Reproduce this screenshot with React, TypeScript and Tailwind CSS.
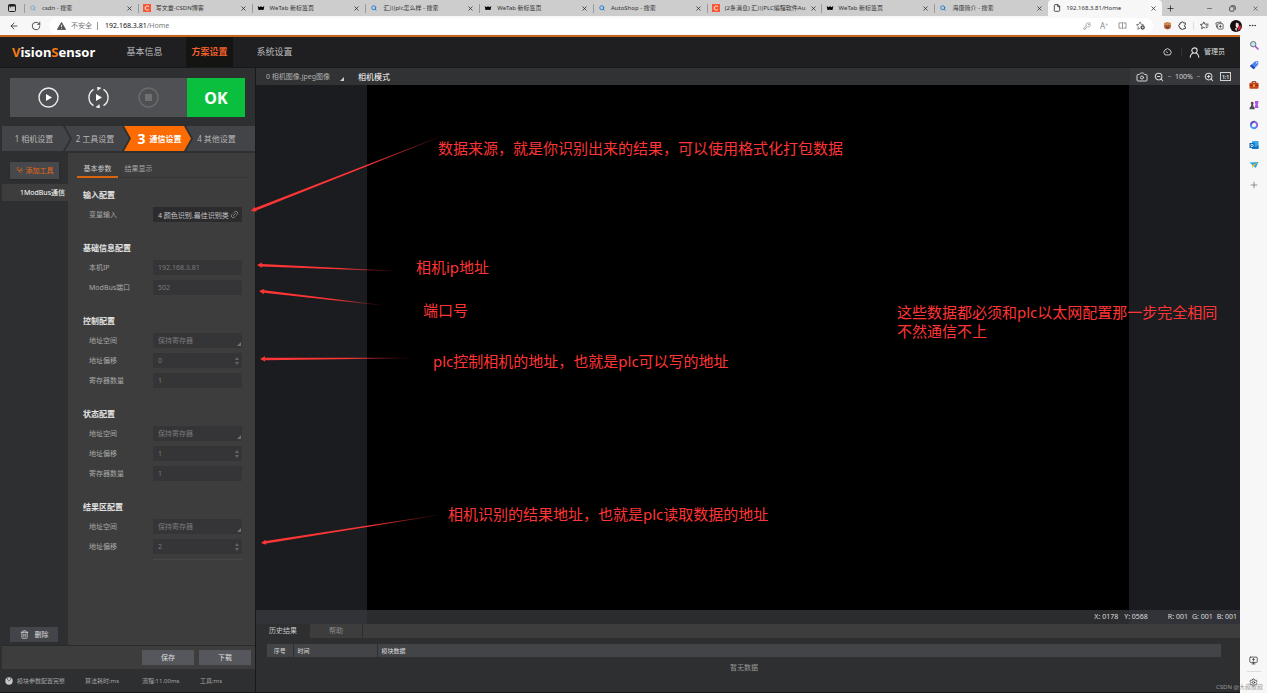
import { useId, useState } from 'react';
import type { ReactNode } from 'react';
import {
  ArrowLeft,
  Camera,
  File,
  KeyRound,
  Link2,
  Minus,
  MonitorUp,
  MoreHorizontal,
  Plus,
  RotateCw,
  Search,
  Settings,
  Trash2,
  X,
  ZoomIn,
  ZoomOut,
} from 'lucide-react';

type Favicon = 'search' | 'searchPale' | 'csdn' | 'wetab' | 'file';

const browserTabs: { title: string; icon: Favicon }[] = [
  { title: 'csdn - 搜索', icon: 'searchPale' },
  { title: '写文章-CSDN博客', icon: 'csdn' },
  { title: 'WeTab 新标签页', icon: 'wetab' },
  { title: '汇川plc怎么样 - 搜索', icon: 'search' },
  { title: 'WeTab 新标签页', icon: 'wetab' },
  { title: 'AutoShop - 搜索', icon: 'search' },
  { title: '(2条消息) 汇川PLC编程软件Au', icon: 'csdn' },
  { title: 'WeTab 新标签页', icon: 'wetab' },
  { title: '海康简介 - 搜索', icon: 'search' },
  { title: '192.168.3.81/Home', icon: 'file' },
];

const notes = [
  { place: 'left-[438px] top-[139px]', lines: ['数据来源，就是你识别出来的结果，可以使用格式化打包数据'] },
  { place: 'left-[416px] top-[258px]', lines: ['相机ip地址'] },
  { place: 'left-[423px] top-[301px]', lines: ['端口号'] },
  { place: 'left-[433px] top-[352px]', lines: ['plc控制相机的地址，也就是plc可以写的地址'] },
  { place: 'left-[448px] top-[505px]', lines: ['相机识别的结果地址，也就是plc读取数据的地址'] },
  { place: 'left-[897px] top-[303px]', lines: ['这些数据都必须和plc以太网配置那一步完全相同', '不然通信不上'] },
];

// tip x, tip y, tail x, tail y
const arrows = [
  [251, 211, 442, 136],
  [257, 265, 394, 271],
  [259, 291, 380, 305],
  [260, 359, 408, 358],
  [261, 543, 439, 515],
];

function TabIcon({ icon }: { icon: Favicon }) {
  if (icon === 'csdn') {
    return (
      <svg viewBox="0 0 8 8" className="size-2 shrink-0">
        <rect width="8" height="8" fill="#fc5531" />
        <path d="M5.9 2.4C4.5 1.6 2.2 2 2.1 4.1c0 2 2.1 2.3 3.6 1.6" fill="none" stroke="#fff" strokeWidth="1" />
      </svg>
    );
  }
  if (icon === 'wetab') {
    return (
      <svg viewBox="0 0 8 8" className="size-2 shrink-0">
        <path d="M.7 2l1.8 1.3L4 2.2l1.5 1.1L7.3 2l-.8 4H4.7L4 5.2 3.3 6H1.5z" fill="#000" />
      </svg>
    );
  }
  if (icon === 'file') return <File className="size-2 shrink-0 text-black" strokeWidth={2} />;
  return (
    <Search
      className={icon === 'search' ? 'size-[6px] shrink-0 text-[#1378d1]' : 'size-[6px] shrink-0 text-[#7ea6c8]'}
      strokeWidth={3.5}
    />
  );
}

function BrowserChrome() {
  return (
    <header className="text-[#333]">
      <div className="flex h-4 items-center bg-[#cdcdcd]">
        <button aria-label="标签页" className="flex w-6 shrink-0 justify-center">
          <svg viewBox="0 0 8 8" className="size-2" fill="none" stroke="#222">
            <rect x=".5" y=".5" width="7" height="7" rx="1" />
            <path d="M.5 1.7h7" strokeWidth="1.6" />
            <path d="M2.6 2v1.4" />
          </svg>
        </button>
        <div className="flex h-full min-w-0 flex-1">
          {browserTabs.map((tab, i) => (
            <div
              key={i}
              className={
                i === browserTabs.length - 1
                  ? 'flex min-w-0 flex-1 items-center gap-[5px] rounded-t bg-[#f7f7f7] px-[5px] text-[6px]'
                  : 'flex min-w-0 flex-1 items-center gap-[5px] bg-[linear-gradient(#9a9a9a,#9a9a9a)] bg-size-[1px_9px] bg-position-[0_4px] bg-no-repeat px-[5px] text-[6px]'
              }
            >
              <span className="flex w-2 shrink-0 justify-center"><TabIcon icon={tab.icon} /></span>
              <span className="flex-1 whitespace-nowrap">{tab.title}</span>
              <button aria-label="关闭标签页">
                <X className="size-[7px] text-[#222]" strokeWidth={2.5} />
              </button>
            </div>
          ))}
        </div>
        <div className="flex w-[105px] shrink-0 items-center justify-between pr-[8px] pl-1">
          <button aria-label="新建标签页"><Plus className="size-[9px] text-[#222]" strokeWidth={2} /></button>
          <div className="flex gap-4">
            <button aria-label="最小化"><Minus className="size-[7px]" /></button>
            <button aria-label="还原">
              <svg viewBox="0 0 8 8" className="size-[7px]" fill="none" stroke="#333" strokeWidth=".9">
                <rect x=".7" y="2" width="5" height="5" rx="1" />
                <path d="M2.4.8h3.3A1.5 1.5 0 017.2 2.3v3.2" />
              </svg>
            </button>
            <button aria-label="关闭"><X className="size-[7px]" /></button>
          </div>
        </div>
      </div>
      <div className="flex h-[19px] items-center bg-[#f7f7f7]">
        <div className="flex w-[49px] shrink-0 items-center justify-center gap-3">
          <button aria-label="返回"><ArrowLeft className="size-[10px]" strokeWidth={2} /></button>
          <button aria-label="刷新"><RotateCw className="size-[10px]" strokeWidth={2} /></button>
        </div>
        <div className="flex h-4 flex-1 items-center rounded-full bg-white px-2">
          <svg viewBox="0 0 10 9" className="h-2 w-[9px]">
            <path d="M5 .5L9.6 8.5H.4z" fill="#555" stroke="#555" strokeLinejoin="round" />
            <path d="M5 3v2.8M5 6.6v1" stroke="#fff" strokeWidth=".9" />
          </svg>
          <span className="ml-[5px] text-[#777]">不安全</span>
          <span className="mr-[7px] ml-[5px] h-2 w-px bg-[#999]" />
          <span className="text-[#111]">192.168.3.81<span className="text-[#777]">/Home</span></span>
          <div className="ml-auto flex items-center gap-[9px] text-[#888]">
            <KeyRound className="size-2" />
            <span className="w-[9px] text-[8px]">A<sup className="text-[5px]">»</sup></span>
            <svg viewBox="0 0 10 8" className="h-[7px] w-[9px]" fill="none" stroke="#888">
              <path d="M4 1H1v6h3M6 1h3v6H6M5 0v8" />
            </svg>
            <svg viewBox="0 0 10 10" className="size-[9px]" fill="none" stroke="#666" strokeLinejoin="round">
              <path d="M4.6 8L2 9.2l.5-3L.5 4.1l2.8-.4L4.6 1l1.3 2.7 2.6.4" strokeWidth=".9" />
              <circle cx="7.4" cy="7.2" r="2.4" fill="#444" stroke="none" />
              <path d="M7.4 6v2.4M6.2 7.2h2.4" stroke="#fff" strokeWidth=".7" />
            </svg>
          </div>
        </div>
        <div className="flex w-[114px] shrink-0 items-center justify-between pr-[10px] pl-[10px]">
          <svg viewBox="0 0 10 10" className="size-[9px]">
            <circle cx="5" cy="5.4" r="4" fill="#b5613c" />
            <path d="M1 1.5l2 1.3 2-1.6 2 1.6 2-1.3-.4 3.4H1.4z" fill="#d78a4c" />
            <path d="M3 5.2h1.2M5.8 5.2H7M3.5 7.2h3" stroke="#4a1f16" strokeWidth=".9" />
          </svg>
          <svg viewBox="0 0 10 10" className="size-[9px]" fill="none" stroke="#333">
            <path d="M3.6 2.1a1.2 1.2 0 012.4 0h2.2v2.1a1.1 1.1 0 000 2.3v2H6.1a1.2 1.2 0 01-2.4 0H2.2V6.8a1.5 1.5 0 010-3V2.1z" />
          </svg>
          <span className="h-2 w-px bg-[#ddd]" />
          <svg viewBox="0 0 10 10" className="size-[9px]" fill="none" stroke="#333" strokeLinejoin="round">
            <path d="M5.6 7.8L4.2 7.1 1.8 8.6l.5-2.8L.4 3.9l2.6-.4L4.2 1l1.2 2.5h4M6.4 5.4h3M6.4 7.3h2" strokeWidth=".9" />
          </svg>
          <svg viewBox="0 0 10 10" className="size-[9px]" fill="none" stroke="#333">
            <path d="M2 7.5L1 2.2 6.5 1l.4 1.5" strokeWidth=".8" />
            <rect x="3" y="3" width="6" height="6" rx="1" strokeWidth=".8" />
            <path d="M6 4.5v3M4.5 6h3" strokeWidth=".8" />
          </svg>
          <svg viewBox="0 0 12 12" className="size-3">
            <circle cx="6" cy="6" r="6" fill="#170d10" />
            <path d="M6 2.4l2.6 1.2.3 3L7 8.4 5.6 6z" fill="#f0dcd6" />
            <path d="M8.5 6l2.8-.8-.8 4-3 1.8z" fill="#cf2638" />
            <path d="M5 8l2 .6-.8 2.8z" fill="#fff" />
          </svg>
          <MoreHorizontal className="size-[9px]" strokeWidth={2.5} />
        </div>
      </div>
    </header>
  );
}

function EdgeSidebar() {
  return (
    <aside className="flex w-[27px] shrink-0 flex-col items-center bg-[#f7f7f7] pt-[5px] pb-[6px]">
      <div className="flex flex-col items-center gap-[10px]">
        <svg viewBox="0 0 10 10" className="size-[10px]">
          <path d="M6 6l3 3" stroke="#b14be0" strokeWidth="1.7" strokeLinecap="round" />
          <circle cx="4.2" cy="4.2" r="2.7" fill="#c9e3ee" stroke="#68747c" />
        </svg>
        <svg viewBox="0 0 10 10" className="size-[10px]">
          <path d="M1 6l4.8-4.4L9.4 1l-.3 3.8L4.7 9.3z" fill="#4f86f4" />
          <path d="M1 6l1.6-1.4 3.6 3.2-1.5 1.5z" fill="#2349b8" />
          <circle cx="7.7" cy="2.7" r=".7" fill="#fff" />
        </svg>
        <svg viewBox="0 0 10 10" className="size-[10px]">
          <path d="M3.2 3V1.7h3.6V3" fill="none" stroke="#7d2b14" />
          <rect x=".5" y="2.7" width="9" height="6" rx="1" fill="#c9431c" />
          <path d="M.5 5.3h9" stroke="#8e2a10" />
          <rect x="4" y="4.5" width="2" height="2" fill="#f2b84c" />
        </svg>
        <svg viewBox="0 0 10 10" className="size-[10px]">
          <path d="M6 1h3.4v2L8.7 4l.8 4H5.8l.7-4L6 3z" fill="#b44bea" />
          <path d="M3.2 1.8a1.4 1.4 0 01.9 2.5l.4 2.2 1.2 1.2v1.5H.6V7.7l1.2-1.2.5-2.2a1.4 1.4 0 01.9-2.5z" fill="#504c56" />
        </svg>
        <svg viewBox="0 0 10 10" className="size-[10px]" fill="none" strokeWidth="2.1" strokeLinecap="round">
          <path d="M5.6 1.8A3.2 3.2 0 002 4.6" stroke="#5b51c8" />
          <path d="M1.9 5.6a3.2 3.2 0 004.6 2.2" stroke="#4a9bf0" />
          <path d="M7.4 7A3.2 3.2 0 007 2.5" stroke="#8a6be8" />
        </svg>
        <svg viewBox="0 0 10 10" className="size-[10px]">
          <rect x="3" y="1" width="6.5" height="8" rx=".8" fill="#31a5e7" />
          <path d="M3 5l3.5 2.2L9.5 5v4H3z" fill="#1272c4" />
          <rect x=".5" y="3" width="5" height="5" rx=".6" fill="#0a64b5" />
          <circle cx="3" cy="5.5" r="1.2" fill="none" stroke="#fff" strokeWidth=".8" />
        </svg>
        <svg viewBox="0 0 10 10" className="size-[10px]">
          <path d="M.5 2.5L9.5 2 6.8 8 4.5 6z" fill="#2aa6e2" />
          <path d="M9.5 2L3 5.3 3.5 8.4 4.6 6.2z" fill="#f2b632" />
        </svg>
        <Plus className="size-[10px] text-[#555]" strokeWidth={1.5} />
      </div>
      <div className="mt-auto flex flex-col items-center gap-[6px] text-[#333]">
        <MonitorUp className="size-[9px]" strokeWidth={2} />
        <span className="h-px w-[14px] bg-[#ddd]" />
        <Settings className="size-[9px]" strokeWidth={2} />
      </div>
    </aside>
  );
}

function Section({ title, children }: { title: string; children: ReactNode }) {
  return (
    <section>
      <h3 className="mb-[7px] text-[8px] font-bold text-[#e2e2e2]">{title}</h3>
      <div className="flex flex-col gap-[5px] pl-[6px]">{children}</div>
    </section>
  );
}

interface FieldProps {
  label: string;
  value: string;
  kind?: 'text' | 'select' | 'number' | 'link';
}

function Field({ label, value, kind = 'text' }: FieldProps) {
  const id = useId();
  return (
    <div className="flex h-[15px] items-center">
      <label htmlFor={id} className="w-16 text-[#a9a9a9]">{label}</label>
      <div className="relative flex-1">
        {kind === 'select' ? (
          <select id={id} className="block h-[15px] w-full appearance-none bg-[#353537] px-[5px] text-[#7a7a7a]">
            <option>{value}</option>
          </select>
        ) : (
          <input
            id={id}
            defaultValue={value}
            className={
              kind === 'link'
                ? 'block h-[15px] w-full bg-[#2c2c2f] pr-[13px] pl-[5px] text-[#c4c4c4]'
                : 'block h-[15px] w-full bg-[#353537] px-[5px] text-[#7a7a7a]'
            }
          />
        )}
        {kind === 'select' && (
          <svg viewBox="0 0 4 4" className="absolute right-px bottom-[2px] size-1"><path d="M4 0v4H0z" fill="#737373" /></svg>
        )}
        {kind === 'number' && (
          <svg viewBox="0 0 4 8" className="absolute top-1 right-[3px] h-2 w-1">
            <path d="M2 0l2 3H0zM2 8l2-3H0z" fill="#666" />
          </svg>
        )}
        {kind === 'link' && <Link2 className="absolute top-[3px] right-[3px] size-[9px] -rotate-45 text-[#999]" />}
      </div>
    </div>
  );
}

function RunControls() {
  return (
    <div className="mx-[10px] mt-[10px] flex h-[39px]">
      <div className="flex flex-1 items-center gap-[29px] bg-[#4f5054] pl-7">
        <button aria-label="单次运行">
          <svg viewBox="0 0 21 21" className="size-[21px]">
            <circle cx="10.5" cy="10.5" r="9.5" fill="none" stroke="#eee" strokeWidth="1.4" />
            <path d="M8 7l6 3.5L8 14z" fill="#fff" />
          </svg>
        </button>
        <button aria-label="连续运行">
          <svg viewBox="0 0 21 21" className="size-[21px]" fill="none" stroke="#eee" strokeWidth="1.4">
            <path d="M5.5 2.4A9.5 9.5 0 005.5 18.6M8.3 19.8a9.5 9.5 0 002.7.2M15.5 18.6a9.5 9.5 0 000-16.2M12.7 1.2a9.5 9.5 0 00-2.7-.2" />
            <path d="M9 -.5l3.5 1.8L9.6 4zM12 21.5l-3.5-1.8 2.9-2.7z" fill="#eee" stroke="none" />
            <path d="M8 7l6 3.5L8 14z" fill="#fff" stroke="none" />
          </svg>
        </button>
        <button aria-label="停止">
          <svg viewBox="0 0 21 21" className="size-[21px]">
            <circle cx="10.5" cy="10.5" r="9.5" fill="none" stroke="#6c6c6e" strokeWidth="1.4" />
            <rect x="7" y="7" width="7" height="7" fill="#707072" />
          </svg>
        </button>
      </div>
      <div className="flex w-[58px] items-center justify-center bg-[#0bbf3e] text-base leading-4 font-bold text-white">OK</div>
    </div>
  );
}

function Steps() {
  return (
    <nav className="mt-[9px] ml-[2px] flex h-[25px] text-[8px] text-[#b5b5b5]">
      <button className="w-[68px] bg-[#434447] pr-1 [clip-path:polygon(0_0,61px_0,100%_50%,61px_100%,0_100%)]">
        1 相机设置
      </button>
      <button className="-ml-[5px] w-16 bg-[#434447] pr-1 [clip-path:polygon(0_0,57px_0,100%_50%,57px_100%,0_100%,7px_50%)]">
        2 工具设置
      </button>
      <button className="-ml-[5px] flex w-[67px] items-center justify-center gap-1 bg-[#fd6b03] pl-1 font-bold text-white [clip-path:polygon(0_0,60px_0,100%_50%,60px_100%,0_100%,7px_50%)]">
        <span className="text-sm">3</span>通信设置
      </button>
      <button className="-ml-[5px] flex-1 bg-[#434447] pr-2 [clip-path:polygon(0_0,100%_0,100%_100%,0_100%,7px_50%)]">
        4 其他设置
      </button>
    </nav>
  );
}

function LeftPanel() {
  const [tab, setTab] = useState('基本参数');

  return (
    <div className="flex w-64 shrink-0 flex-col border-r border-[#18191b] bg-[#2e2f31]">
      <RunControls />
      <Steps />
      <div className="mt-[2px] flex flex-1">
        <div className="flex w-[68px] shrink-0 flex-col pt-[9px] pb-[3px]">
          <button className="ml-[10px] flex h-[17px] w-[49px] items-center justify-center gap-[3px] bg-[#47484c] text-[#e8670f] shadow">
            <svg viewBox="0 0 8 8" className="size-[7px]" fill="none" stroke="currentColor">
              <path d="M1 2l2.5 2.5L7 1.5M3.5 4.5L6 7M1 1h2M5.5 4h2" />
            </svg>
            添加工具
          </button>
          <button className="mt-[5px] ml-[2px] h-[17px] bg-[#3d3d3d] pr-[3px] text-right whitespace-nowrap text-white">
            1ModBus通信
          </button>
          <button className="mt-auto ml-[10px] flex h-[15px] w-12 items-center justify-center gap-[6px] bg-[#43454a] text-[#ddd]">
            <Trash2 className="size-[9px]" />
            删除
          </button>
        </div>
        <div className="flex-1 bg-[#3d3d3d] pr-[13px] pl-[15px]">
          <div className="-mr-[6px] -ml-[6px] flex h-[25px] border-b border-[#353535] pt-[9px]">
            {['基本参数', '结果显示'].map((name) => (
              <button
                key={name}
                onClick={() => setTab(name)}
                className={
                  tab === name
                    ? 'h-4 w-[41px] border-b-2 border-b-[#d9640f] text-[#ccc]'
                    : 'h-4 w-[41px] border-b-2 border-b-transparent text-[#a5a5a5]'
                }
              >
                {name}
              </button>
            ))}
          </div>
          <form className="mt-3 flex flex-col gap-[21px]">
            <Section title="输入配置">
              <Field label="变量输入" value="4 颜色识别.最佳识别类" kind="link" />
            </Section>
            <Section title="基础信息配置">
              <Field label="本机IP" value="192.168.3.81" />
              <Field label="ModBus端口" value="502" />
            </Section>
            <Section title="控制配置">
              <Field label="地址空间" value="保持寄存器" kind="select" />
              <Field label="地址偏移" value="0" kind="number" />
              <Field label="寄存器数量" value="1" />
            </Section>
            <Section title="状态配置">
              <Field label="地址空间" value="保持寄存器" kind="select" />
              <Field label="地址偏移" value="1" kind="number" />
              <Field label="寄存器数量" value="1" />
            </Section>
            <Section title="结果区配置">
              <Field label="地址空间" value="保持寄存器" kind="select" />
              <Field label="地址偏移" value="2" kind="number" />
              <span className="ml-16 h-px bg-[#484848]" />
            </Section>
          </form>
        </div>
      </div>
      <div className="ml-[2px] flex h-6 items-center justify-end gap-[5px] border-t border-[#2a2a2a] bg-[#3d3d3d] pr-1 text-[#ddd]">
        <button className="h-[15px] w-[52px] bg-[#55575c]">保存</button>
        <button className="h-[15px] w-[52px] bg-[#55575c]">下载</button>
      </div>
      <div className="grid h-6 grid-cols-[80px_57px_58px_1fr] items-center border-b border-[#18191b] pl-[5px] text-[6px] text-[#a5a5a5]">
        <span className="flex items-center gap-1">
          <svg viewBox="0 0 8 8" className="size-2">
            <circle cx="4" cy="4" r="3.7" fill="#c8c8c8" />
            <path d="M2.6 1v1.8L4 4.2l1.4-1.4V1" fill="none" stroke="#555" strokeWidth=".8" />
          </svg>
          模块参数配置完整
        </span>
        <span>算法耗时:ms</span>
        <span>流程:11.00ms</span>
        <span>工具:ms</span>
      </div>
    </div>
  );
}

function Workspace() {
  return (
    <div className="flex min-w-0 flex-1 flex-col bg-[#2e2f31]">
      <div className="flex h-[17px] shrink-0 items-center bg-[#313234] pl-[10px]">
        <button className="flex items-center gap-[10px] text-[#b0b0b0]">
          0 相机图像.jpeg图像
          <svg viewBox="0 0 4 4" className="mt-[5px] size-1"><path d="M4 0v4H0z" fill="#ccc" /></svg>
        </button>
        <span className="ml-[14px] text-[8px] text-white">相机模式</span>
        <div className="ml-auto flex h-full w-[110px] items-center bg-[#37383c] pl-[6px] text-[#d5d5d5]">
          <button aria-label="截图"><Camera className="size-3" /></button>
          <button aria-label="缩小" className="ml-[6px]"><ZoomOut className="size-[10px]" strokeWidth={2.5} /></button>
          <span className="ml-1 h-px w-[3px] bg-[#777]" />
          <span className="mx-1 w-[18px] text-center">100%</span>
          <span className="mr-1 h-px w-[3px] bg-[#777]" />
          <button aria-label="放大"><ZoomIn className="size-[10px]" strokeWidth={2.5} /></button>
          <button aria-label="原始大小" className="ml-[6px] flex h-[9px] w-[11px] items-center justify-center border border-[#d5d5d5] text-[5px] font-bold">
            1:1
          </button>
        </div>
      </div>
      <div className="flex-1 bg-[#1b1c20]">
        <div className="mx-auto h-full w-[77.5%] bg-black" />
      </div>
      <div className="flex h-[14px] items-center justify-end gap-[6px] bg-[linear-gradient(90deg,#323338_11.25%,#2b2c2e_11.25%_88.75%,#323338_88.75%)] pr-[3px] text-[#ddd]">
        <span>X: 0178</span>
        <span className="mr-[14px]">Y: 0568</span>
        <span className="flex gap-1">
          <span>R: 001</span>
          <span>G: 001</span>
          <span>B: 001</span>
        </span>
      </div>
      <div className="flex h-[14px] bg-[#3d3d3d]">
        <button className="w-[54px] bg-[#2e2f31] text-[#c8c8c8]">历史结果</button>
        <button className="w-[53px] border-r border-[#2c2c2c] text-[#8d8d8d]">帮助</button>
      </div>
      <div className="h-[55px] border-b border-[#18191b] pt-[6px] pr-[19px] pl-[11px]">
        <table className="w-full table-fixed text-[6px]">
          <thead>
            <tr className="h-[13px] bg-[#434447] text-left text-[#ddd]">
              <th className="w-[26px] border-r border-[#2e2f31] text-center font-normal">序号</th>
              <th className="w-[84px] border-r border-[#2e2f31] pl-1 font-normal">时间</th>
              <th className="pl-1 font-normal">模块数据</th>
            </tr>
          </thead>
          <tbody>
            <tr className="h-[22px]">
              <td colSpan={3} className="text-center text-[7px] text-[#999]">暂无数据</td>
            </tr>
          </tbody>
        </table>
      </div>
    </div>
  );
}

function Annotations() {
  return (
    <div className="pointer-events-none absolute inset-0">
      <svg width="1267" height="693" viewBox="0 0 1267 693" className="absolute top-0 left-0">
        <defs>
          <linearGradient id="fade">
            <stop offset="0" stopColor="#ff3535" />
            <stop offset=".6" stopColor="#ff3535" />
            <stop offset="1" stopColor="#ff3535" stopOpacity="0.1" />
          </linearGradient>
        </defs>
        {arrows.map(([x1, y1, x2, y2]) => {
          const length = Math.hypot(x2 - x1, y2 - y1);
          const angle = (Math.atan2(y2 - y1, x2 - x1) * 180) / Math.PI;
          return (
            <path
              key={y1}
              d={`M0 0L5 -2.6L5 -1.3L${length} -0.2V0.2L5 1.3V2.6Z`}
              fill="url(#fade)"
              transform={`translate(${x1} ${y1}) rotate(${angle})`}
            />
          );
        })}
      </svg>
      {notes.map((note) => (
        <p key={note.place} className={`absolute text-[15px] leading-[19px] whitespace-nowrap text-[#ff3535] ${note.place}`}>
          {note.lines.map((line) => (
            <span key={line} className="block">{line}</span>
          ))}
        </p>
      ))}
      <span className="absolute right-1 bottom-px text-[6px] text-[#999]">CSDN @大叔叔叔</span>
    </div>
  );
}

export default function App() {
  return (
    <div className="relative flex min-h-screen flex-col bg-[#2e2f31] font-['Noto_Sans','Noto_Sans_CJK_SC',sans-serif] text-[7px] leading-[10px]">
      <BrowserChrome />
      <div className="flex flex-1">
        <main className="flex min-w-0 flex-1 flex-col border-t-2 border-[#c9651d]">
          <div className="flex h-[31px] shrink-0 items-center border-b border-[#18191b] bg-[#1f1f22] pr-[15px] pl-3 text-[#bbb]">
            <h1 className="w-[109px] text-[13px] font-bold text-white">
              <span className="text-[#f37a13]">V</span>ision<span className="text-[#f37a13]">S</span>ensor
            </h1>
            <nav className="flex h-full gap-[18px] text-[9px]">
              <a href="#info" className="flex w-[47px] items-center justify-center">基本信息</a>
              <a href="#plan" className="flex w-[47px] items-center justify-center bg-[#141413] font-bold text-[#f4602c]">方案设置</a>
              <a href="#system" className="flex w-[47px] items-center justify-center">系统设置</a>
            </nav>
            <div className="ml-auto flex items-center text-[#ddd]">
              <svg viewBox="0 0 10 9" className="h-2 w-[9px]" fill="none" stroke="currentColor">
                <path d="M2.2 7.8a4 4 0 115.6 0z" strokeLinejoin="round" />
                <path d="M5 5.6L3.7 3.8" />
              </svg>
              <span className="mr-[7px] ml-[9px] h-2 w-px bg-[#333]" />
              <svg viewBox="0 0 12 12" className="mr-1 size-[11px]" fill="none" stroke="currentColor" strokeWidth="1.2">
                <circle cx="6" cy="3.9" r="2.9" />
                <path d="M1.3 11.6C1.5 8.6 3 7 4.8 6.6M10.7 11.6C10.5 8.6 9 7 7.2 6.6" />
              </svg>
              管理员
            </div>
          </div>
          <div className="flex flex-1">
            <LeftPanel />
            <Workspace />
          </div>
        </main>
        <EdgeSidebar />
      </div>
      <Annotations />
    </div>
  );
}
